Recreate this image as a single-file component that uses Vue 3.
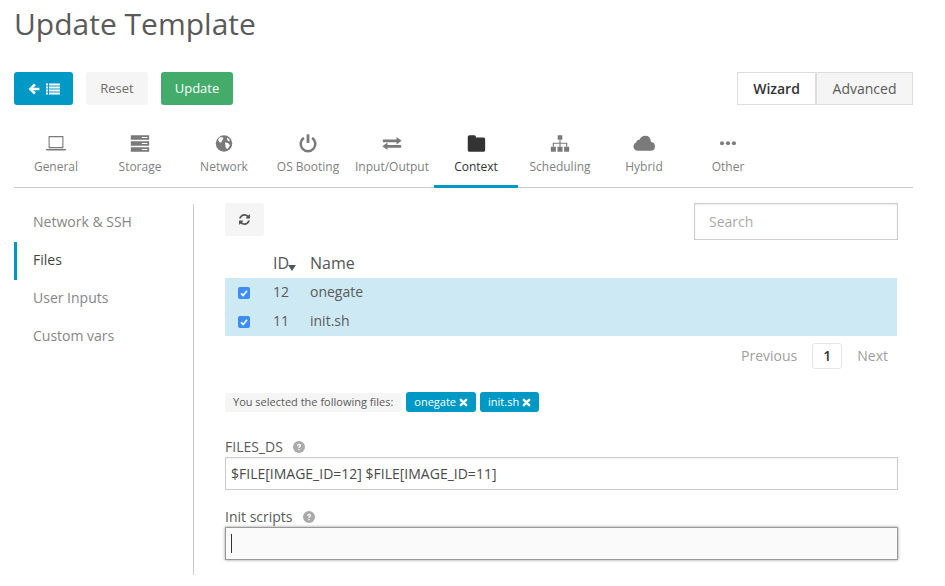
<template>
  <div class="page">
    <h1 class="title">Update Template</h1>

    <div class="toolbar">
      <button class="btn back" aria-label="Back to list">
        <svg class="ico-arrow" viewBox="0 0 12 12"><path d="M6 .6.6 6 6 11.400l1.800-1.800L5.300 7.300H11.400V4.700H5.300L7.800 2.400z" fill="currentColor"/></svg>
        <svg class="ico-list" viewBox="0 0 14 12"><path d="M0 .5h2v2H0zM3 .5h11v2H3zM0 3.500h2v2H0zM3 3.500h11v2H3zM0 6.500h2v2H0zM3 6.500h11v2H3zM0 9.500h2v2H0zM3 9.500h11v2H3z" fill="currentColor"/></svg>
      </button>
      <button class="btn reset">Reset</button>
      <button class="btn update">Update</button>
      <div class="switch">
        <span class="switch-item on">Wizard</span>
        <span class="switch-item">Advanced</span>
      </div>
    </div>

    <nav class="tabs">
      <div v-for="tab in tabs" :key="tab.name" class="tab" :class="{ active: tab.name === 'Context' }">
        <svg class="tab-icon" viewBox="0 0 24 20" v-html="tab.icon"></svg>
        <span>{{ tab.name }}</span>
      </div>
    </nav>

    <div class="body">
      <aside class="side">
        <div v-for="item in sideItems" :key="item" class="side-item" :class="{ active: item === 'Files' }">{{ item }}</div>
      </aside>

      <main class="content">
        <div class="table-top">
          <button class="btn refresh" aria-label="Refresh">
            <svg viewBox="0 0 1536 1536"><path d="M1511 928q0 5-1 7-64 268-268 434.500T764 1536q-146 0-282.500-55T238 1324l-129 129q-19 19-45 19t-45-19-19-45V960q0-26 19-45t45-19h448q26 0 45 19t19 45-19 45l-137 137q71 66 161 102t187 36q134 0 250-65t186-179q11-17 53-117 8-23 30-23h192q13 0 22.500 9.500t9.500 22.500zM1536 128v448q0 26-19 45t-45 19h-448q-26 0-45-19t-19-45 19-45l138-138Q969 256 768 256q-134 0-250 65T332 500q-11 17-53 117-8 23-30 23H50q-13 0-22.500-9.500T18 608v-7q65-268 270-434.500T768 0q146 0 284 55.500T1297 212l130-129q19-19 45-19t45 19 19 45z" fill="currentColor"/></svg>
          </button>
          <input class="search" type="text" placeholder="Search" />
        </div>

        <table class="files">
          <thead>
            <tr>
              <th class="col-check"></th>
              <th class="col-id">ID<i class="sort"></i></th>
              <th>Name</th>
            </tr>
          </thead>
          <tbody>
            <tr v-for="file in files" :key="file.id">
              <td class="col-check">
                <span class="check">
                  <svg viewBox="0 0 12 12"><path d="M3 6.300 5.200 8.500 9 3.800" fill="none" stroke="#fff" stroke-width="1.800"/></svg>
                </span>
              </td>
              <td class="col-id">{{ file.id }}</td>
              <td>{{ file.name }}</td>
            </tr>
          </tbody>
        </table>

        <div class="pager">
          <span>Previous</span>
          <span class="page-no">1</span>
          <span>Next</span>
        </div>

        <div class="selected">
          <span class="selected-label">You selected the following files:</span>
          <span v-for="file in files" :key="file.id" class="tag">
            {{ file.name }}
            <svg viewBox="0 0 10 10"><path d="M2 2l6 6M8 2l-6 6" stroke="#fff" stroke-width="2.600" fill="none" stroke-linecap="round"/></svg>
          </span>
        </div>

        <label class="field-label first">FILES_DS <svg class="help" viewBox="0 0 12 12" v-html="helpIcon"></svg></label>
        <div class="field">$FILE[IMAGE_ID=12] $FILE[IMAGE_ID=11]</div>

        <label class="field-label second">Init scripts <svg class="help" viewBox="0 0 12 12" v-html="helpIcon"></svg></label>
        <div class="field focused"><i class="caret"></i></div>
      </main>
    </div>
  </div>
</template>

<script setup>
// Icones dessinees a la main, sur une grille 24x20
const tabs = [
  {
    name: 'General',
    icon: '<path d="M4.500 2.500h15v12h-15z" fill="none" stroke="currentColor" stroke-width="1.200"/><path d="M1 16h22v.6q0 1-1.500 1h-19Q1 17.600 1 16.600z" fill="currentColor"/>'
  },
  {
    name: 'Storage',
    icon: '<path d="M2 1h20v5H2zM2 7.500h20v5H2zM2 14h20v5H2z" fill="currentColor"/><path d="M14 3h6v1h-6zM14 9.500h6v1h-6zM14 16h6v1h-6z" fill="#fff"/>'
  },
  {
    name: 'Network',
    icon: '<circle cx="12" cy="10" r="9" fill="currentColor"/><path d="M7 3.500l3-.6 1.500 1.600-1.500 2-1 2.500-2-.5-1.500-2.500zM13 9l3.500.5 2 2.500-2.500 4-2-1-.5-3zM15 3.500l2.500 1.500 1 2.500-2.500-.5z" fill="#fff"/>'
  },
  {
    name: 'OS Booting',
    icon: '<path d="M10.500 0h3v9.500h-3z" fill="currentColor"/><path d="M7.500 3.800a8 8 0 1 0 9 0" fill="none" stroke="currentColor" stroke-width="2.800"/>'
  },
  {
    name: 'Input/Output',
    icon: '<path d="M2 5.500h15V3l5.500 4-5.500 4V8.500H2zM22 11.500H7V9l-5.500 4L7 17v-2.500h15z" fill="currentColor"/>'
  },
  {
    name: 'Context',
    icon: '<path d="M5 1h5q2 0 2 2v.5h8q2 0 2 2V17q0 2-2 2H5q-2 0-2-2V3q0-2 2-2z" fill="currentColor"/>'
  },
  {
    name: 'Scheduling',
    icon: '<path d="M9.500 1h5v5h-5zM2 13.500h5.500V19H2zM9.250 13.500h5.500V19h-5.500zM16.500 13.500H22V19h-5.500z" fill="currentColor"/><path d="M12 6v7.500M4.700 13.500V9.700h14.600v3.800" fill="none" stroke="currentColor" stroke-width="1.200"/>'
  },
  {
    name: 'Hybrid',
    icon: '<path d="M6 18q-5 0-5.500-4.500Q.5 10 3.500 9 3.800 6 7 6 9 1.500 13.500 1.500 19 1.500 19.500 8q4.500 1 4.500 5 0 5-5 5z" fill="currentColor"/>'
  },
  {
    name: 'Other',
    icon: '<circle cx="5.500" cy="9.700" r="2.200" fill="currentColor"/><circle cx="12" cy="9.700" r="2.200" fill="currentColor"/><circle cx="18.500" cy="9.700" r="2.200" fill="currentColor"/>'
  }
]

const sideItems = ['Network & SSH', 'Files', 'User Inputs', 'Custom vars']

const files = [
  { id: 12, name: 'onegate' },
  { id: 11, name: 'init.sh' }
]

const helpIcon = '<circle cx="6" cy="6" r="6" fill="currentColor"/><path d="M4 4.700q0-1.900 2.100-1.900 2 0 2 1.700 0 1-1 1.500-.6.400-.6 1H5.300q0-1.200.9-1.800.6-.4.600-.7 0-.5-.7-.5-.7 0-.8.700zM5.300 8.100h1.300v1.200H5.300z" fill="#fff"/>'
</script>

<style>
html, body {
  background: #fff;
}
</style>

<style scoped>
.page {
  width: 945px;
  height: 586px;
  overflow: hidden;
  box-sizing: border-box;
  padding: 0 32px 0 14px;
  font-family: "Open Sans", sans-serif;
  color: #555;
}

.title {
  margin: 0;
  padding-top: 3px;
  font-size: 30px;
  font-weight: 400;
  line-height: 41px;
  height: 72px;
  box-sizing: border-box;
  color: #5a5a5a;
}

.toolbar {
  display: flex;
  height: 33px;
  align-items: stretch;
}

.btn {
  border: 0;
  border-radius: 3px;
  font-family: inherit;
  font-size: 13px;
  padding: 0;
  display: flex;
  align-items: center;
  justify-content: center;
}

.back {
  width: 59px;
  background: #0099c6;
  color: #fff;
  gap: 6px;
}

.ico-arrow {
  width: 12px;
  height: 12px;
}

.ico-list {
  width: 14px;
  height: 12px;
}

.reset {
  width: 62px;
  margin-left: 13px;
  padding-bottom: 2px;
  background: #f5f5f5;
  color: #6e6e6e;
}

.update {
  width: 72px;
  margin-left: 13px;
  padding-bottom: 2px;
  background: #43ac6a;
  color: #fff;
}

.switch {
  margin-left: auto;
  display: flex;
  font-size: 14px;
}

.switch-item {
  width: 97px;
  box-sizing: border-box;
  border: 1px solid #ddd;
  background: #f5f5f5;
  color: #5a5a5a;
  display: flex;
  align-items: center;
  justify-content: center;
}

.switch-item.on {
  width: 79px;
  background: #fff;
  color: #333;
  font-weight: 600;
}

.tabs {
  display: flex;
  height: 83px;
  box-sizing: border-box;
  padding-top: 29px;
  border-bottom: 1px solid #ccc;
}

.tab {
  width: 84px;
  height: 54px;
  box-sizing: border-box;
  display: flex;
  flex-direction: column;
  align-items: center;
  font-size: 12px;
  color: #7f7f7f;
  line-height: 16px;
}

.tab span {
  margin-top: 6px;
}

.tab-icon {
  width: 22px;
  height: 19px;
  color: #7a7a7a;
}

.tab.active {
  color: #333;
  border-bottom: 3px solid #0099c6;
}

.tab.active .tab-icon {
  color: #333;
}

.body {
  display: flex;
  margin-top: 16px;
}

.side {
  width: 180px;
  height: 371px;
  box-sizing: border-box;
  border-right: 1px solid #ccc;
  flex: none;
}

.side-item {
  height: 38px;
  line-height: 36px;
  box-sizing: border-box;
  padding-left: 19px;
  font-size: 14px;
  color: #868686;
}

.side-item.active {
  border-left: 3px solid #0099c6;
  padding-left: 16px;
  color: #444;
}

.content {
  margin-left: 31px;
  width: 673px;
  flex: none;
  margin-top: -1px;
}

.table-top {
  display: flex;
  justify-content: space-between;
  align-items: flex-start;
  height: 46px;
}

.refresh {
  width: 39px;
  height: 33px;
  background: #f5f5f5;
  color: #555;
}

.refresh svg {
  width: 11px;
  height: 11px;
}

.search {
  width: 204px;
  height: 37px;
  box-sizing: border-box;
  border: 1px solid #ccc;
  padding: 0 14px;
  font-family: inherit;
  font-size: 14px;
  outline: none;
  box-shadow: inset 0 1px 2px rgba(0, 0, 0, 0.08);
}

.search::placeholder {
  color: #aaa;
}

.files {
  width: 672px;
  border-collapse: collapse;
  font-size: 14px;
  table-layout: fixed;
}

.files th {
  height: 29px;
  padding: 0;
  text-align: left;
  font-size: 16px;
  font-weight: 400;
  line-height: 21px;
  color: #555;
}

.files td {
  height: 29px;
  box-sizing: border-box;
  padding: 0 0 2px;
  background: #cdeaf4;
  color: #5a5a5a;
}

.col-check {
  width: 48px;
}

.files td.col-check {
  padding-left: 13px;
}

.col-id {
  width: 37px;
}

.sort {
  display: inline-block;
  width: 0;
  height: 0;
  border-left: 4px solid transparent;
  border-right: 4px solid transparent;
  border-top: 6px solid #555;
  vertical-align: -2px;
  margin-left: -1px;
}

.check {
  display: block;
  width: 12px;
  height: 12px;
  border-radius: 2px;
  background: #3c8df5;
  margin-top: 2px;
}

.check svg {
  display: block;
  width: 12px;
  height: 12px;
}

.pager {
  display: flex;
  align-items: center;
  justify-content: flex-end;
  height: 27px;
  margin-top: 6px;
  padding-right: 10px;
  font-size: 14px;
  color: #a0a0a0;
  gap: 15px;
}

.page-no {
  width: 30px;
  height: 26px;
  box-sizing: border-box;
  border: 1px solid #e6e6e6;
  border-radius: 3px;
  color: #333;
  font-weight: 600;
  display: flex;
  align-items: center;
  justify-content: center;
}

.selected {
  display: flex;
  align-items: center;
  margin-top: 23px;
  height: 20px;
  font-size: 11px;
}

.selected-label {
  background: #f5f5f5;
  border-radius: 3px;
  padding: 0 8px;
  height: 19px;
  line-height: 17px;
  color: #5a5a5a;
  margin-right: 5px;
}

.tag {
  display: flex;
  align-items: center;
  gap: 3px;
  height: 20px;
  box-sizing: border-box;
  padding: 0 8px 2px;
  border-radius: 3px;
  background: #0099c6;
  color: #fff;
  margin-right: 4px;
}

.tag svg {
  width: 9px;
  height: 9px;
  margin-top: 2px;
}

.field-label {
  display: block;
  font-size: 14px;
  color: #5a5a5a;
  line-height: 19px;
}

.field-label.first {
  margin-top: 25px;
}

.field-label.second {
  margin-top: 17px;
}

.help {
  width: 12px;
  height: 12px;
  color: #aaa;
  margin-left: 6px;
  vertical-align: -1px;
}

.field-label.second .help {
  margin-left: 7px;
}

.field {
  height: 33px;
  box-sizing: border-box;
  border: 1px solid #ccc;
  padding: 0 5px;
  margin-top: 1px;
  font-size: 14px;
  line-height: 31px;
  color: #4a4a4a;
  width: 673px;
  box-shadow: inset 0 1px 2px rgba(0, 0, 0, 0.06);
}

.field.focused {
  background: #fafafa;
  border-color: #999;
  box-shadow: 0 0 3px rgba(0, 0, 0, 0.4);
}

.caret {
  display: block;
  width: 1px;
  height: 19px;
  background: #333;
  margin-top: 6px;
}
</style>
